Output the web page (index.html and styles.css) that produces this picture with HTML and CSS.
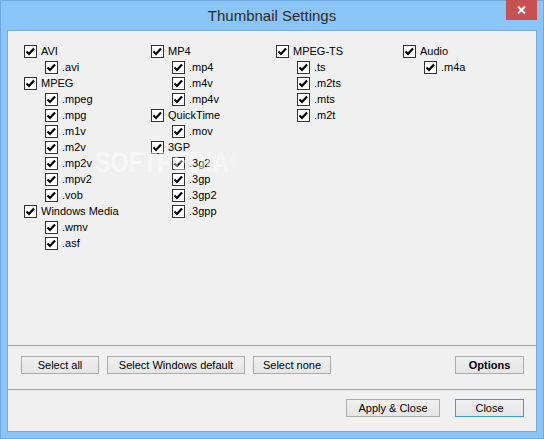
FILE: index.html
```html
<!DOCTYPE html>
<html>
<head>
<meta charset="utf-8">
<link rel="stylesheet" href="styles.css">
</head>
<body>
<div class="window">
  <div class="titlebar">
    <div></div>
    <div class="title">Thumbnail Settings</div>
    <div class="close"><svg width="9" height="8" viewBox="0 0 9 8"><path d="M1 0.5 L8 7.5 M8 0.5 L1 7.5" stroke="#fff" stroke-width="2"/></svg></div>
  </div>
  <div class="client">
    <div class="lists">
      <div class="col">
        <div class="item"><svg class="cb" viewBox="0 0 13 13"><rect x="0.5" y="0.5" width="12" height="12"/><path d="M2.5 6.5 L5 9 L10 3.5"/></svg><span>AVI</span></div>
        <div class="item sub"><svg class="cb" viewBox="0 0 13 13"><rect x="0.5" y="0.5" width="12" height="12"/><path d="M2.5 6.5 L5 9 L10 3.5"/></svg><span>.avi</span></div>
        <div class="item"><svg class="cb" viewBox="0 0 13 13"><rect x="0.5" y="0.5" width="12" height="12"/><path d="M2.5 6.5 L5 9 L10 3.5"/></svg><span>MPEG</span></div>
        <div class="item sub"><svg class="cb" viewBox="0 0 13 13"><rect x="0.5" y="0.5" width="12" height="12"/><path d="M2.5 6.5 L5 9 L10 3.5"/></svg><span>.mpeg</span></div>
        <div class="item sub"><svg class="cb" viewBox="0 0 13 13"><rect x="0.5" y="0.5" width="12" height="12"/><path d="M2.5 6.5 L5 9 L10 3.5"/></svg><span>.mpg</span></div>
        <div class="item sub"><svg class="cb" viewBox="0 0 13 13"><rect x="0.5" y="0.5" width="12" height="12"/><path d="M2.5 6.5 L5 9 L10 3.5"/></svg><span>.m1v</span></div>
        <div class="item sub"><svg class="cb" viewBox="0 0 13 13"><rect x="0.5" y="0.5" width="12" height="12"/><path d="M2.5 6.5 L5 9 L10 3.5"/></svg><span>.m2v</span></div>
        <div class="item sub"><svg class="cb" viewBox="0 0 13 13"><rect x="0.5" y="0.5" width="12" height="12"/><path d="M2.5 6.5 L5 9 L10 3.5"/></svg><span>.mp2v</span></div>
        <div class="item sub"><svg class="cb" viewBox="0 0 13 13"><rect x="0.5" y="0.5" width="12" height="12"/><path d="M2.5 6.5 L5 9 L10 3.5"/></svg><span>.mpv2</span></div>
        <div class="item sub"><svg class="cb" viewBox="0 0 13 13"><rect x="0.5" y="0.5" width="12" height="12"/><path d="M2.5 6.5 L5 9 L10 3.5"/></svg><span>.vob</span></div>
        <div class="item"><svg class="cb" viewBox="0 0 13 13"><rect x="0.5" y="0.5" width="12" height="12"/><path d="M2.5 6.5 L5 9 L10 3.5"/></svg><span>Windows Media</span></div>
        <div class="item sub"><svg class="cb" viewBox="0 0 13 13"><rect x="0.5" y="0.5" width="12" height="12"/><path d="M2.5 6.5 L5 9 L10 3.5"/></svg><span>.wmv</span></div>
        <div class="item sub"><svg class="cb" viewBox="0 0 13 13"><rect x="0.5" y="0.5" width="12" height="12"/><path d="M2.5 6.5 L5 9 L10 3.5"/></svg><span>.asf</span></div>
      </div>
      <div class="col">
        <div class="item"><svg class="cb" viewBox="0 0 13 13"><rect x="0.5" y="0.5" width="12" height="12"/><path d="M2.5 6.5 L5 9 L10 3.5"/></svg><span>MP4</span></div>
        <div class="item sub"><svg class="cb" viewBox="0 0 13 13"><rect x="0.5" y="0.5" width="12" height="12"/><path d="M2.5 6.5 L5 9 L10 3.5"/></svg><span>.mp4</span></div>
        <div class="item sub"><svg class="cb" viewBox="0 0 13 13"><rect x="0.5" y="0.5" width="12" height="12"/><path d="M2.5 6.5 L5 9 L10 3.5"/></svg><span>.m4v</span></div>
        <div class="item sub"><svg class="cb" viewBox="0 0 13 13"><rect x="0.5" y="0.5" width="12" height="12"/><path d="M2.5 6.5 L5 9 L10 3.5"/></svg><span>.mp4v</span></div>
        <div class="item"><svg class="cb" viewBox="0 0 13 13"><rect x="0.5" y="0.5" width="12" height="12"/><path d="M2.5 6.5 L5 9 L10 3.5"/></svg><span>QuickTime</span></div>
        <div class="item sub"><svg class="cb" viewBox="0 0 13 13"><rect x="0.5" y="0.5" width="12" height="12"/><path d="M2.5 6.5 L5 9 L10 3.5"/></svg><span>.mov</span></div>
        <div class="item"><svg class="cb" viewBox="0 0 13 13"><rect x="0.5" y="0.5" width="12" height="12"/><path d="M2.5 6.5 L5 9 L10 3.5"/></svg><span>3GP</span></div>
        <div class="item sub"><svg class="cb" viewBox="0 0 13 13"><rect x="0.5" y="0.5" width="12" height="12"/><path d="M2.5 6.5 L5 9 L10 3.5"/></svg><span>.3g2</span></div>
        <div class="item sub"><svg class="cb" viewBox="0 0 13 13"><rect x="0.5" y="0.5" width="12" height="12"/><path d="M2.5 6.5 L5 9 L10 3.5"/></svg><span>.3gp</span></div>
        <div class="item sub"><svg class="cb" viewBox="0 0 13 13"><rect x="0.5" y="0.5" width="12" height="12"/><path d="M2.5 6.5 L5 9 L10 3.5"/></svg><span>.3gp2</span></div>
        <div class="item sub"><svg class="cb" viewBox="0 0 13 13"><rect x="0.5" y="0.5" width="12" height="12"/><path d="M2.5 6.5 L5 9 L10 3.5"/></svg><span>.3gpp</span></div>
      </div>
      <div class="col">
        <div class="item"><svg class="cb" viewBox="0 0 13 13"><rect x="0.5" y="0.5" width="12" height="12"/><path d="M2.5 6.5 L5 9 L10 3.5"/></svg><span>MPEG-TS</span></div>
        <div class="item sub"><svg class="cb" viewBox="0 0 13 13"><rect x="0.5" y="0.5" width="12" height="12"/><path d="M2.5 6.5 L5 9 L10 3.5"/></svg><span>.ts</span></div>
        <div class="item sub"><svg class="cb" viewBox="0 0 13 13"><rect x="0.5" y="0.5" width="12" height="12"/><path d="M2.5 6.5 L5 9 L10 3.5"/></svg><span>.m2ts</span></div>
        <div class="item sub"><svg class="cb" viewBox="0 0 13 13"><rect x="0.5" y="0.5" width="12" height="12"/><path d="M2.5 6.5 L5 9 L10 3.5"/></svg><span>.mts</span></div>
        <div class="item sub"><svg class="cb" viewBox="0 0 13 13"><rect x="0.5" y="0.5" width="12" height="12"/><path d="M2.5 6.5 L5 9 L10 3.5"/></svg><span>.m2t</span></div>
      </div>
      <div class="col">
        <div class="item"><svg class="cb" viewBox="0 0 13 13"><rect x="0.5" y="0.5" width="12" height="12"/><path d="M2.5 6.5 L5 9 L10 3.5"/></svg><span>Audio</span></div>
        <div class="item sub"><svg class="cb" viewBox="0 0 13 13"><rect x="0.5" y="0.5" width="12" height="12"/><path d="M2.5 6.5 L5 9 L10 3.5"/></svg><span>.m4a</span></div>
      </div>
    </div>
    <div class="bar bar1">
      <button class="btn w-all">Select all</button>
      <button class="btn w-def">Select Windows default</button>
      <button class="btn w-none">Select none</button>
      <button class="btn w-opt bold push">Options</button>
    </div>
    <div class="bar bar2">
      <button class="btn w-apply">Apply &amp; Close</button>
      <button class="btn w-opt default">Close</button>
    </div>
    <span class="watermark">SOFTPEDIA<span class="reg">®</span></span>
  </div>
</div>
</body>
</html>
```

FILE: styles.css
```css
html, body {
  margin: 0;
  padding: 0;
}
body {
  width: 544px;
  height: 439px;
  overflow: hidden;
  font-family: "Liberation Sans", Arial, sans-serif;
}
.window {
  box-sizing: border-box;
  width: 544px;
  height: 439px;
  background: #8bc5f7;
  border: 1px solid #70a9dc;
  display: flex;
  flex-direction: column;
}
.titlebar {
  height: 29px;
  display: grid;
  grid-template-columns: 1fr auto 1fr;
  flex: none;
}
.title {
  font-size: 15px;
  line-height: 29px;
  color: #2b2b2b;
}
.close {
  justify-self: end;
  align-self: start;
  width: 31px;
  height: 20px;
  margin-top: -1px;
  margin-right: 6px;
  background: #c75050;
  display: flex;
  align-items: center;
  justify-content: center;
}
.client {
  position: relative;
  flex: 1;
  margin: 0 6px 6px 6px;
  border: 1px solid #76acdd;
  background: #f0f0f0;
  display: flex;
  flex-direction: column;
}
.lists {
  flex: 1;
  display: grid;
  grid-template-columns: 127px 125px 127px 1fr;
  align-items: start;
  padding: 14px 0 0 16px;
}
.item {
  height: 16px;
  display: flex;
  align-items: flex-start;
  gap: 4px;
  font-size: 11px;
  color: #000;
}
.item span {
  line-height: 13px;
}
.item.sub {
  padding-left: 21px;
}
.cb {
  width: 13px;
  height: 13px;
  flex: none;
}
.cb rect {
  fill: #fff;
  stroke: #333;
}
.cb path {
  fill: none;
  stroke: #000;
  stroke-width: 2.2;
}
.bar {
  display: flex;
  align-items: flex-start;
  border-top: 1px solid #a0a0a0;
  flex: none;
}
.bar1 {
  height: 44px;
  padding: 10px 12px 0 13px;
  gap: 8px;
  box-sizing: border-box;
}
.bar2 {
  height: 42px;
  box-sizing: border-box;
  padding: 9px 12px 0 0;
  justify-content: flex-end;
  gap: 15px;
}
.btn {
  box-sizing: border-box;
  height: 18px;
  padding: 0;
  margin: 0;
  border: 1px solid #acacac;
  background: linear-gradient(#f0f0f0, #e5e5e5);
  font-family: "Liberation Sans", Arial, sans-serif;
  font-size: 11px;
  color: #000;
  line-height: 16px;
}
.btn.bold {
  font-weight: bold;
}
.btn.default {
  border-color: #3c9ae6;
}
.push {
  margin-left: auto;
}
.w-all { width: 78px; }
.w-def { width: 138px; }
.w-none { width: 78px; }
.w-opt { width: 69px; }
.w-apply { width: 94px; }
.watermark {
  position: absolute;
  left: 87px;
  top: 113px;
  font-size: 30px;
  font-weight: bold;
  line-height: 36px;
  color: rgba(255, 255, 255, 0.45);
  transform: scaleX(0.78);
  transform-origin: left top;
  pointer-events: none;
  white-space: nowrap;
}
.watermark .reg {
  font-size: 11px;
  vertical-align: top;
  font-weight: normal;
}
```
